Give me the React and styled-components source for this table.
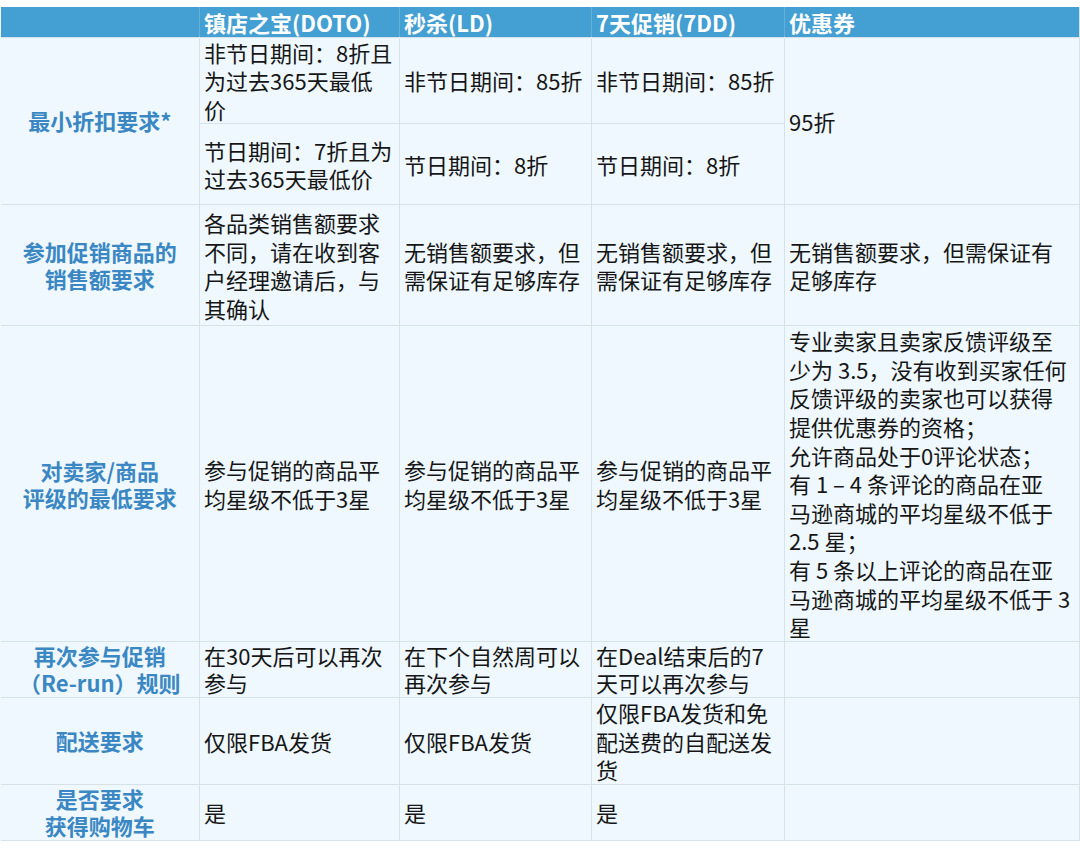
import React from 'react'
import styled, { createGlobalStyle } from 'styled-components'

const GlobalStyle = createGlobalStyle`
  html, body {
    margin: 0;
    padding: 0;
    background: #ffffff;
  }
  body {
    padding-top: 7px;
    font-family: "Noto Sans CJK SC", "Noto Sans", sans-serif;
  }
`

const Table = styled.table`
  width: 1080px;
  border-collapse: collapse;
  table-layout: fixed;
  background: #eef8fe;
  border-right: 1px solid #d6e2ea;
  border-bottom: 1px solid #d6e2ea;
`

const HeadRow = styled.tr`
  height: 30px;
  background: #449fd2;
`

const HeadCell = styled.th`
  padding: 0 4px;
  text-align: left;
  vertical-align: middle;
  color: #ffffff;
  font-size: 22px;
  font-weight: 700;
  line-height: 28px;
  white-space: nowrap;
  border-left: 1px solid rgba(255, 255, 255, 0.18);
`

const Row = styled.tr`
  height: ${props => props.h}px;
  ${props => props.tight && 'td { line-height: 27px; }'}
`

const LabelCell = styled.td`
  padding: 0 4px;
  text-align: center;
  vertical-align: middle;
  color: #3a87c3;
  font-size: 22px;
  font-weight: 700;
  line-height: 27px !important;
  white-space: nowrap;
  border: 1px solid #d6e2ea;
  border-left: none;
`

const Cell = styled.td`
  padding: 0 4px;
  text-align: left;
  vertical-align: middle;
  color: #161616;
  font-size: 22px;
  line-height: 28.6px;
  white-space: nowrap;
  border: 1px solid #d6e2ea;
`

const Line = styled.span`
  display: block;
`

const Lines = ({ text }) =>
  text.map((t, i) => <Line key={i}>{t}</Line>)

const columns = ['', '镇店之宝(DOTO)', '秒杀(LD)', '7天促销(7DD)', '优惠券']

export default function App() {
  return (
    <>
      <GlobalStyle />
      <Table>
        <colgroup>
          <col style={{ width: 199 }} />
          <col style={{ width: 200 }} />
          <col style={{ width: 192 }} />
          <col style={{ width: 193 }} />
          <col />
        </colgroup>
        <thead>
          <HeadRow>
            {columns.map((c, i) => <HeadCell key={i}>{c}</HeadCell>)}
          </HeadRow>
        </thead>
        <tbody>
          <Row h={86}>
            <LabelCell rowSpan={2}>最小折扣要求*</LabelCell>
            <Cell><Lines text={['非节日期间：8折且', '为过去365天最低', '价']} /></Cell>
            <Cell>非节日期间：85折</Cell>
            <Cell>非节日期间：85折</Cell>
            <Cell rowSpan={2}>95折</Cell>
          </Row>
          <Row h={81}>
            <Cell><Lines text={['节日期间：7折且为', '过去365天最低价']} /></Cell>
            <Cell>节日期间：8折</Cell>
            <Cell>节日期间：8折</Cell>
          </Row>
          <Row h={121}>
            <LabelCell><Lines text={['参加促销商品的', '销售额要求']} /></LabelCell>
            <Cell><Lines text={['各品类销售额要求', '不同，请在收到客', '户经理邀请后，与', '其确认']} /></Cell>
            <Cell><Lines text={['无销售额要求，但', '需保证有足够库存']} /></Cell>
            <Cell><Lines text={['无销售额要求，但', '需保证有足够库存']} /></Cell>
            <Cell><Lines text={['无销售额要求，但需保证有', '足够库存']} /></Cell>
          </Row>
          <Row h={315}>
            <LabelCell><Lines text={['对卖家/商品', '评级的最低要求']} /></LabelCell>
            <Cell><Lines text={['参与促销的商品平', '均星级不低于3星']} /></Cell>
            <Cell><Lines text={['参与促销的商品平', '均星级不低于3星']} /></Cell>
            <Cell><Lines text={['参与促销的商品平', '均星级不低于3星']} /></Cell>
            <Cell>
              <Lines
                text={[
                  '专业卖家且卖家反馈评级至',
                  '少为 3.5，没有收到买家任何',
                  '反馈评级的卖家也可以获得',
                  '提供优惠券的资格；',
                  '允许商品处于0评论状态；',
                  '有 1 – 4 条评论的商品在亚',
                  '马逊商城的平均星级不低于',
                  '2.5 星；',
                  '有 5 条以上评论的商品在亚',
                  '马逊商城的平均星级不低于 3',
                  '星'
                ]}
              />
            </Cell>
          </Row>
          <Row h={56} tight>
            <LabelCell><Lines text={['再次参与促销', '（Re-run）规则']} /></LabelCell>
            <Cell><Lines text={['在30天后可以再次', '参与']} /></Cell>
            <Cell><Lines text={['在下个自然周可以', '再次参与']} /></Cell>
            <Cell><Lines text={['在Deal结束后的7', '天可以再次参与']} /></Cell>
            <Cell />
          </Row>
          <Row h={87}>
            <LabelCell>配送要求</LabelCell>
            <Cell>仅限FBA发货</Cell>
            <Cell>仅限FBA发货</Cell>
            <Cell><Lines text={['仅限FBA发货和免', '配送费的自配送发', '货']} /></Cell>
            <Cell />
          </Row>
          <Row h={56} tight>
            <LabelCell><Lines text={['是否要求', '获得购物车']} /></LabelCell>
            <Cell>是</Cell>
            <Cell>是</Cell>
            <Cell>是</Cell>
            <Cell />
          </Row>
        </tbody>
      </Table>
    </>
  )
}
